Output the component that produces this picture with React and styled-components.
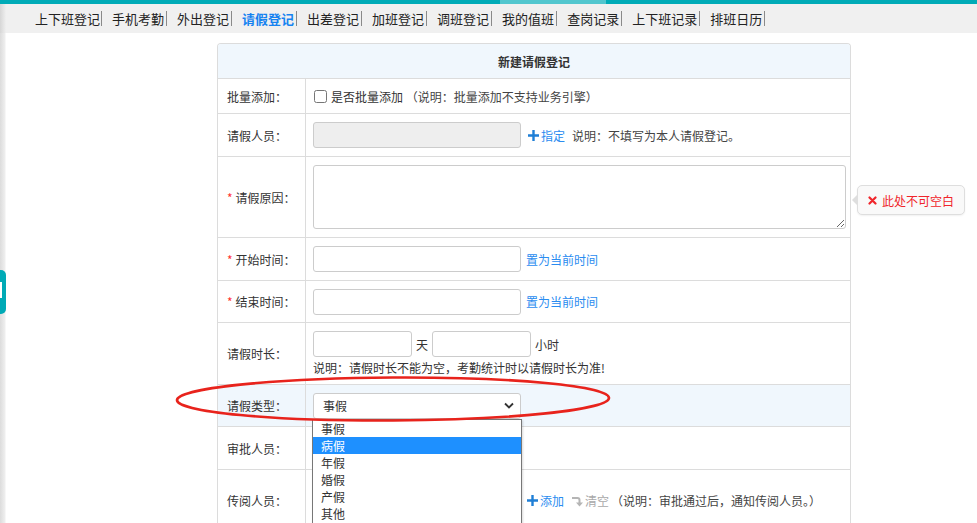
import styled, { createGlobalStyle } from 'styled-components';

const GlobalStyle = createGlobalStyle`
	html, body {
		margin: 0;
		padding: 0;
		background: #fff;
	}
	body {
		color: #333;
		font-family: 'Noto Sans CJK SC', 'Noto Sans', sans-serif;
		font-size: 12px;
	}
	* {
		box-sizing: border-box;
	}
`;

const Page = styled.div`
	background: linear-gradient(90deg, #dcdcdc 0, #efefef 5px, #fff 6px);
	height: 523px;
	overflow: hidden;
	position: relative;
	width: 977px;
`;

const TopLine = styled.div`
	background: #00abb7;
	display: flex;
	height: 4px;
	& span {
		background: #52c6ce;
		margin-left: 500px;
		width: 106px;
	}
`;

const Nav = styled.div`
	align-items: center;
	background: linear-gradient(90deg, #d6d6d6 0, #ebebeb 5px, #f0f0f0 6px);
	display: flex;
	height: 29px;
	padding-left: 35px;
`;

const NavItem = styled.a`
	border-right: 1px solid #8a8a8a;
	color: ${(p) => (p.$active ? '#1683f0' : '#222')};
	cursor: pointer;
	font-size: 13px;
	font-weight: ${(p) => (p.$active ? 'bold' : 'normal')};
	height: 15px;
	line-height: 15px;
	margin-right: 10px;
	padding-right: 2px;
	&:first-child {
		padding-right: 1px;
	}
`;

const Main = styled.div`
	padding: 10px 0 0 217px;
`;

const Card = styled.div`
	border: 1px solid #dcdcdc;
	border-bottom: none;
	border-radius: 4px 4px 0 0;
	width: 634px;
`;

const Table = styled.table`
	border-collapse: separate;
	border-spacing: 0;
	table-layout: fixed;
	width: 100%;
`;

const LabelCol = styled.col`
	width: 88px;
`;

const Row = styled.tr`
	background: ${(p) => (p.$hl ? '#f0f7fd' : '#fff')};
	height: ${(p) => p.$h}px;
`;

const Head = styled.th`
	background: #f0f7fd;
	border-bottom: 1px solid #dcdcdc;
	border-radius: 3px 3px 0 0;
	color: #333;
	font-size: 12px;
	font-weight: bold;
	height: 35px;
`;

const Label = styled.td`
	border-bottom: 1px solid #dcdcdc;
	border-right: 1px solid #dcdcdc;
	padding: 0 0 0 9px;
	vertical-align: middle;
	white-space: nowrap;
	& em {
		color: #f33;
		font-style: normal;
		margin-right: 3px;
	}
`;

const Cell = styled.td`
	border-bottom: 1px solid #dcdcdc;
	padding: 0 5px 0 7px;
	vertical-align: middle;
`;

const Line = styled.div`
	align-items: center;
	display: flex;
	gap: ${(p) => p.$gap || 0}px;
`;

const Input = styled.input`
	background: ${(p) => (p.$disabled ? '#eee' : '#fff')};
	border: 1px solid #ccc;
	border-radius: 3px;
	height: 26px;
	outline: none;
	width: ${(p) => p.$w || 208}px;
`;

const Area = styled.textarea`
	border: 1px solid #ccc;
	border-radius: 3px;
	display: block;
	height: 64px;
	outline: none;
	width: 533px;
`;

const Link = styled.a`
	align-items: center;
	color: ${(p) => (p.$muted ? '#a9a9a9' : '#2a8cf0')};
	cursor: pointer;
	display: inline-flex;
	white-space: nowrap;
`;

const Note = styled.span`
	color: #444;
	white-space: nowrap;
`;

const Check = styled.input`
	height: 13px;
	margin: 0 4px 0 1px;
	width: 13px;
`;

const Hint = styled.div`
	color: #333;
	margin-top: 2px;
`;

const Anchor = styled.div`
	position: relative;
	width: ${(p) => p.$w}px;
`;

const Tip = styled.div`
	align-items: center;
	background: #f9f9f9;
	border: 1px solid #dedede;
	border-radius: 5px;
	box-shadow: 0 1px 2px rgba(0, 0, 0, 0.06);
	color: #f0252b;
	display: flex;
	gap: 5px;
	height: 30px;
	left: calc(100% + 11px);
	padding: 0 10px;
	position: absolute;
	top: 20px;
	white-space: nowrap;
	z-index: 2;
	&::before {
		border-bottom: 5px solid transparent;
		border-right: 5px solid #dedede;
		border-top: 5px solid transparent;
		content: '';
		left: -6px;
		position: absolute;
		top: 9px;
	}
`;

const Select = styled.div`
	align-items: center;
	background: #fff;
	border: 1px solid #ccc;
	border-radius: 3px;
	display: flex;
	height: 26px;
	justify-content: space-between;
	padding: 0 6px 0 9px;
	width: 208px;
`;

const Options = styled.ul`
	background: #fff;
	border: 1px solid #777;
	box-shadow: 1px 1px 2px rgba(0, 0, 0, 0.15);
	height: 120px;
	left: -1px;
	list-style: none;
	margin: 0;
	padding: 0;
	position: absolute;
	top: 26px;
	width: 210px;
	z-index: 3;
`;

const Option = styled.li`
	background: ${(p) => (p.$on ? '#1e90ff' : 'transparent')};
	color: ${(p) => (p.$on ? '#fff' : '#333')};
	height: 17px;
	line-height: 17px;
	padding-left: 8px;
`;

const Ring = styled.svg`
	left: 170px;
	pointer-events: none;
	position: absolute;
	top: 370px;
	z-index: 4;
`;

const SideTab = styled.div`
	background: #00aab6;
	border-radius: 0 5px 5px 0;
	height: 44px;
	left: 0;
	position: absolute;
	top: 270px;
	width: 6px;
	&::after {
		background: #fff;
		content: '';
		height: 16px;
		left: 0;
		position: absolute;
		top: 12px;
		width: 2px;
	}
`;

const Plus = () => (
	<svg width='11' height='11' viewBox='0 0 11 11' style={{ marginRight: 2 }}>
		<path d='M4.3 0h2.4v4.3H11v2.4H6.7V11H4.3V6.7H0V4.3h4.3z' fill='#1f7fd6' />
	</svg>
);

const Clear = () => (
	<svg width='12' height='12' viewBox='0 0 12 12' style={{ marginRight: 2 }}>
		<path d='M1 2h5.5a3 3 0 0 1 3 3v2.5H12L8.5 11.5 5 7.5h2.5V5a1 1 0 0 0-1-1H1z' fill='#b5b5b5' />
	</svg>
);

const Cross = () => (
	<svg width='9' height='9' viewBox='0 0 9 9'>
		<path d='M1.5 1.5l6 6M7.5 1.5l-6 6' stroke='#f0252b' strokeWidth='2.2' strokeLinecap='round' />
	</svg>
);

const Chevron = () => (
	<svg width='10' height='7' viewBox='0 0 10 7'>
		<path d='M1 1.5l4 4 4-4' stroke='#333' strokeWidth='1.8' fill='none' />
	</svg>
);

const navs = ['上下班登记', '手机考勤', '外出登记', '请假登记', '出差登记', '加班登记', '调班登记', '我的值班', '查岗记录', '上下班记录', '排班日历'];
const kinds = ['事假', '病假', '年假', '婚假', '产假', '其他'];

const App = () => (
	<Page>
		<GlobalStyle />
		<TopLine>
			<span />
		</TopLine>
		<Nav>
			{navs.map((n) => (
				<NavItem key={n} $active={n === '请假登记'}>
					{n}
				</NavItem>
			))}
		</Nav>
		<Main>
			<Card>
				<Table>
					<colgroup>
						<LabelCol />
						<col />
					</colgroup>
					<thead>
						<tr>
							<Head colSpan={2}>新建请假登记</Head>
						</tr>
					</thead>
					<tbody>
						<Row $h={35}>
							<Label>批量添加：</Label>
							<Cell>
								<Line>
									<Check type='checkbox' />
									<span>是否批量添加</span>
									<Note>&nbsp;（说明：批量添加不支持业务引擎）</Note>
								</Line>
							</Cell>
						</Row>
						<Row $h={43}>
							<Label>请假人员：</Label>
							<Cell>
								<Line>
									<Input $disabled readOnly />
									<Link style={{ marginLeft: 7 }}>
										<Plus />
										指定
									</Link>
									<Note style={{ marginLeft: 7 }}>说明：不填写为本人请假登记。</Note>
								</Line>
							</Cell>
						</Row>
						<Row $h={81}>
							<Label>
								<em>*</em>请假原因：
							</Label>
							<Cell>
								<Anchor $w={533}>
									<Area />
									<Tip>
										<Cross />
										此处不可空白
									</Tip>
								</Anchor>
							</Cell>
						</Row>
						<Row $h={43}>
							<Label>
								<em>*</em>开始时间：
							</Label>
							<Cell>
								<Line $gap={5}>
									<Input />
									<Link>置为当前时间</Link>
								</Line>
							</Cell>
						</Row>
						<Row $h={42}>
							<Label>
								<em>*</em>结束时间：
							</Label>
							<Cell>
								<Line $gap={5}>
									<Input />
									<Link>置为当前时间</Link>
								</Line>
							</Cell>
						</Row>
						<Row $h={62}>
							<Label>请假时长：</Label>
							<Cell>
								<Line $gap={4}>
									<Input $w={99} />
									<span>天</span>
									<Input $w={99} />
									<span>小时</span>
								</Line>
								<Hint>说明：请假时长不能为空，考勤统计时以请假时长为准!</Hint>
							</Cell>
						</Row>
						<Row $h={42} $hl>
							<Label>请假类型：</Label>
							<Cell>
								<Anchor $w={208}>
									<Select>
										<span>事假</span>
										<Chevron />
									</Select>
									<Options>
										{kinds.map((k) => (
											<Option key={k} $on={k === '病假'}>
												{k}
											</Option>
										))}
									</Options>
								</Anchor>
							</Cell>
						</Row>
						<Row $h={43}>
							<Label>审批人员：</Label>
							<Cell>
								<Input readOnly />
							</Cell>
						</Row>
						<Row $h={62}>
							<Label>传阅人员：</Label>
							<Cell>
								<Line>
									<Input readOnly />
									<Link style={{ marginLeft: 6 }}>
										<Plus />
										添加
									</Link>
									<Link $muted style={{ marginLeft: 7 }}>
										<Clear />
										清空
									</Link>
									<Note style={{ marginLeft: 2 }}>（说明：审批通过后，通知传阅人员。）</Note>
								</Line>
							</Cell>
						</Row>
					</tbody>
				</Table>
			</Card>
		</Main>
		<SideTab />
		<Ring width='450' height='62' viewBox='0 0 450 62'>
			<ellipse cx='223' cy='29' rx='216' ry='21.5' fill='none' stroke='#e8231c' strokeWidth='2.6' transform='rotate(-0.3 223 29)' />
		</Ring>
	</Page>
);

export default App;
